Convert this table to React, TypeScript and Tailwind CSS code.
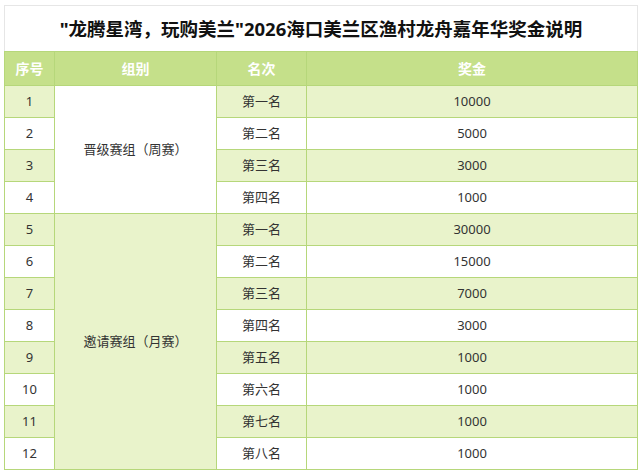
import React from "react";

const rows = [
  { n: 1, rank: "第一名", prize: "10000" },
  { n: 2, rank: "第二名", prize: "5000" },
  { n: 3, rank: "第三名", prize: "3000" },
  { n: 4, rank: "第四名", prize: "1000" },
  { n: 5, rank: "第一名", prize: "30000" },
  { n: 6, rank: "第二名", prize: "15000" },
  { n: 7, rank: "第三名", prize: "7000" },
  { n: 8, rank: "第四名", prize: "3000" },
  { n: 9, rank: "第五名", prize: "1000" },
  { n: 10, rank: "第六名", prize: "1000" },
  { n: 11, rank: "第七名", prize: "1000" },
  { n: 12, rank: "第八名", prize: "1000" },
];

export default function App() {
  return (
    <div
      className="w-[644px] h-[471px] bg-white pl-[4px] pt-[5px] overflow-hidden"
      style={{ fontFamily: '"Noto Sans", "Noto Sans CJK SC", sans-serif' }}
    >
      <div className="w-[634px]">
        <div className="h-[46px] border-t border-l border-r border-[#e6e6e6] flex items-center justify-center text-[18.5px] font-bold text-[#111]">
          "龙腾星湾，玩购美兰"2026海口美兰区渔村龙舟嘉年华奖金说明
        </div>
        <table className="w-[634px] border-collapse table-fixed text-[13px] text-[#333]">
          <colgroup>
            <col className="w-[50px]" />
            <col className="w-[162px]" />
            <col className="w-[90px]" />
            <col />
          </colgroup>
          <thead>
            <tr className="h-[34px] bg-[#c5e08a] text-white font-bold text-[14px]">
              <th className="border border-[#b6d77a]">序号</th>
              <th className="border border-[#b6d77a]">组别</th>
              <th className="border border-[#b6d77a]">名次</th>
              <th className="border border-[#b6d77a]">奖金</th>
            </tr>
          </thead>
          <tbody>
            {rows.map((r, i) => (
              <tr
                key={r.n}
                className={`h-[32px] ${i % 2 === 0 ? "bg-[#e9f3cb]" : "bg-white"}`}
              >
                <td className="border border-[#b6d77a] text-center">{r.n}</td>
                {r.n === 1 && (
                  <td rowSpan={4} className="border border-[#b6d77a] text-center bg-white">
                    晋级赛组（周赛）
                  </td>
                )}
                {r.n === 5 && (
                  <td rowSpan={8} className="border border-[#b6d77a] text-center bg-[#e9f3cb]">
                    邀请赛组（月赛）
                  </td>
                )}
                <td className="border border-[#b6d77a] text-center">{r.rank}</td>
                <td className="border border-[#b6d77a] text-center">{r.prize}</td>
              </tr>
            ))}
          </tbody>
        </table>
      </div>
    </div>
  );
}
